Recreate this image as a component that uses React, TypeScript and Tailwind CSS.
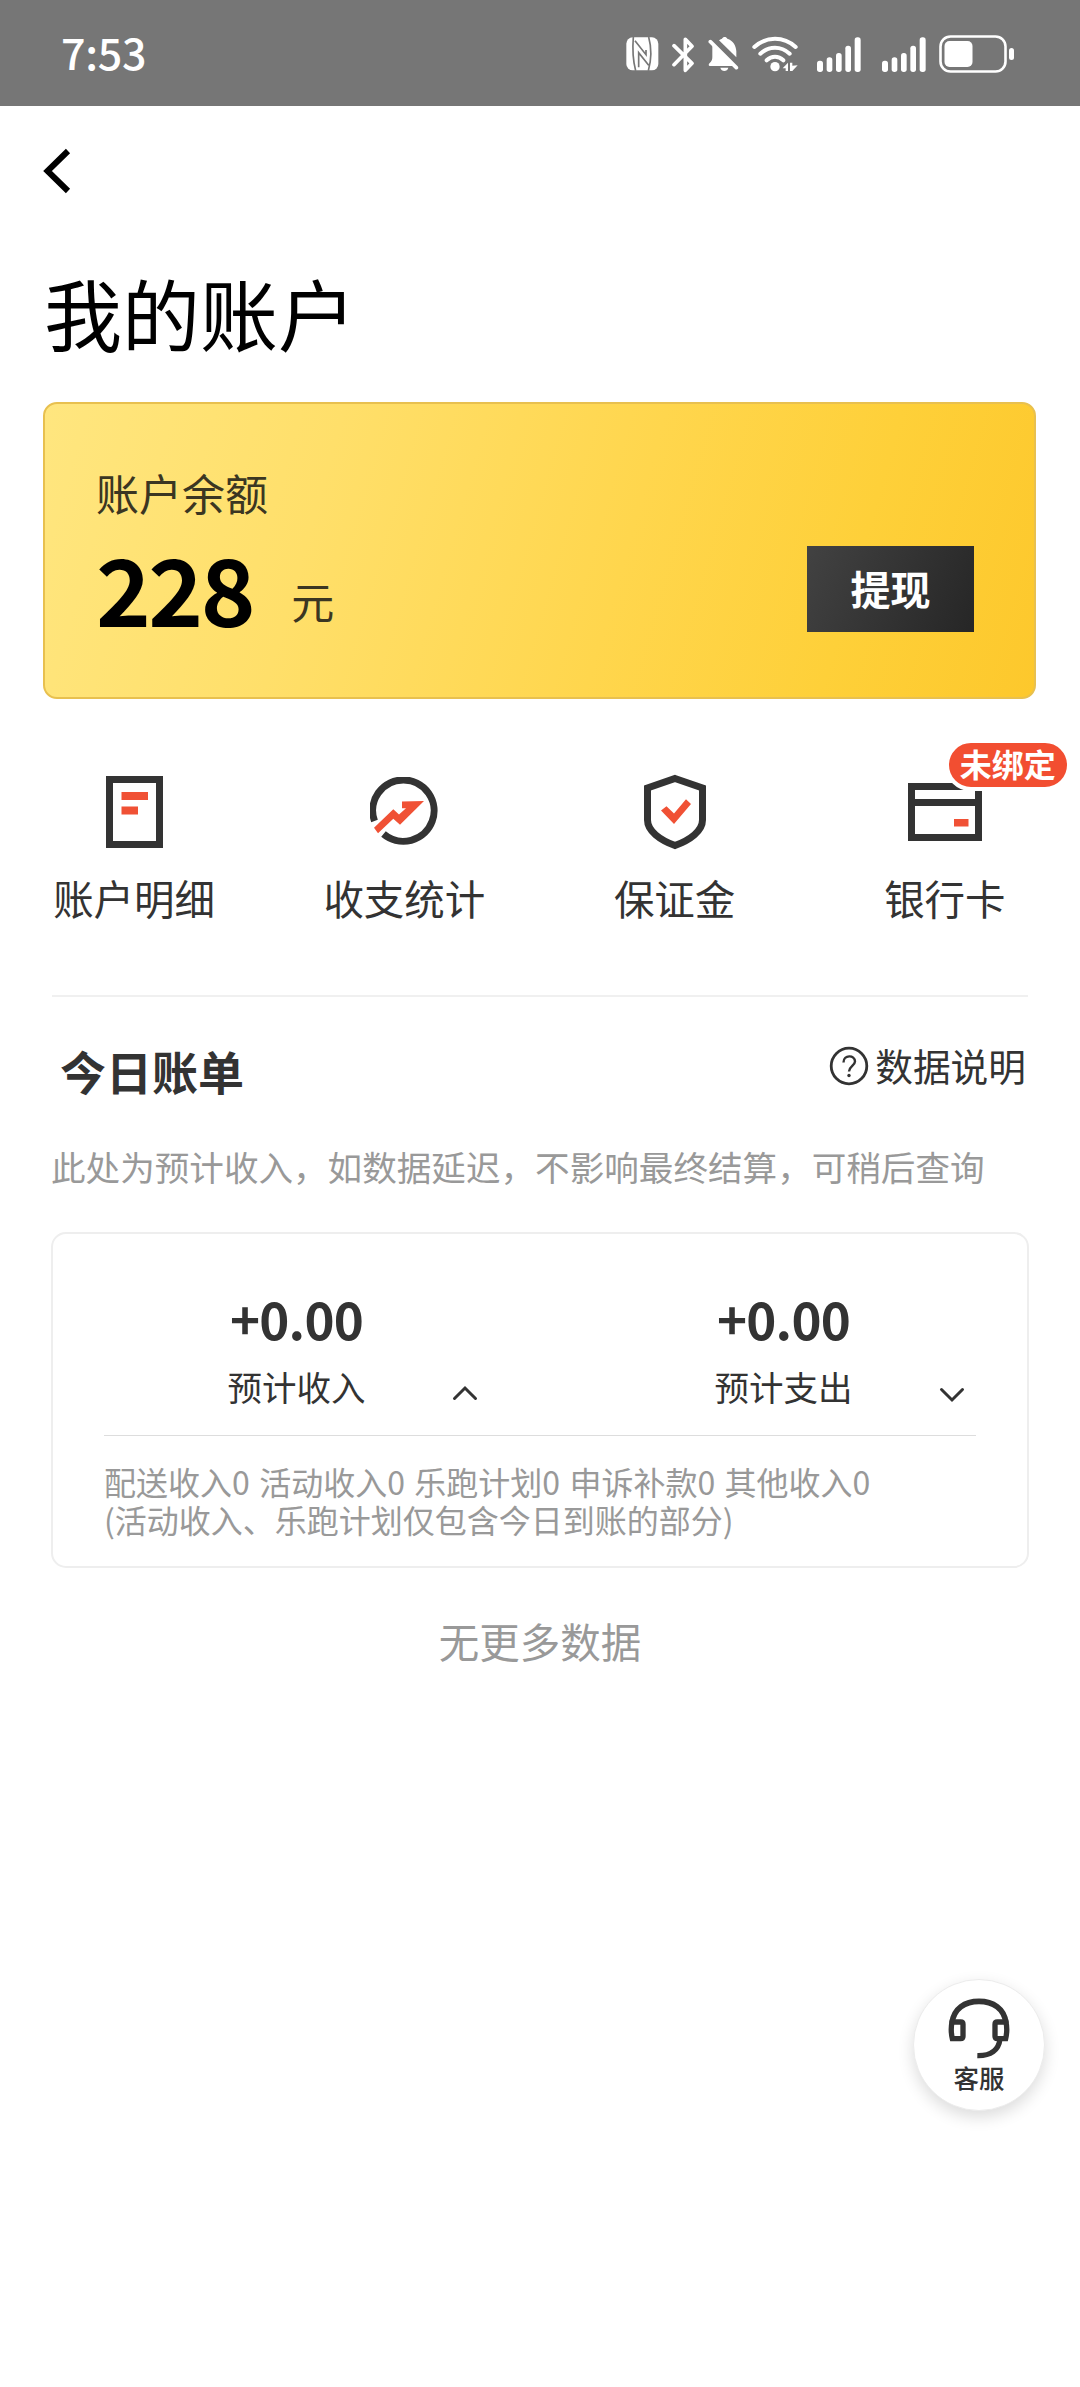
import React from 'react';

interface ShortcutProps {
  label: string;
  badge?: string;
  children: React.ReactNode;
}

interface AmountColumnProps {
  amount: string;
  label: string;
  expanded?: boolean;
}

const SignalIcon: React.FC = () => (
  <svg width="44" height="36" viewBox="0 0 132 108" fill="#fff">
    <rect x="0" y="71" width="18" height="34" rx="8" />
    <rect x="29" y="61" width="17" height="44" rx="8" />
    <rect x="57" y="48" width="17" height="57" rx="8" />
    <rect x="85" y="26" width="17" height="79" rx="8" />
    <rect x="113" y="1" width="18" height="104" rx="8" />
  </svg>
);

const StatusBar: React.FC = () => (
  <div className="flex h-[106px] items-center bg-[#767676] text-white">
    <span className="mt-[-4px] ml-[61px] w-[565px] text-[43px] leading-none font-medium tracking-[-0.3px]">7:53</span>
    {/* NFC */}
    <svg className="mt-[2px]" width="33" height="36" viewBox="0 0 99 108">
      <rect x="1" y="4" width="96" height="99" rx="19" fill="#fff" />
      <path
        d="M22 3C19 40 21 74 29 104M27 14L60 56V42M38 94V50L68 88M68 3C76 32 76 72 67 104"
        fill="none"
        stroke="#767676"
        strokeWidth="5"
      />
    </svg>
    {/* Bluetooth */}
    <svg className="mt-[3px] ml-[13px]" width="23" height="36" viewBox="0 0 69 108" fill="none" stroke="#fff" strokeWidth="11" strokeLinecap="round" strokeLinejoin="round">
      <path d="M6 26l54 53-20 21V7l20 21L6 83" />
    </svg>
    {/* Muted bell */}
    <svg className="mt-[2px] ml-[13px]" width="31" height="36" viewBox="0 0 93 108" fill="#fff">
      <path d="M33 13c4-3 7-4 9-5 3-7 13-7 16 0 17 6 26 20 27 38v18z" />
      <path d="M13 24l66 66H6c-5 0-5-6-1-9 6-5 8-10 8-18zM37 95h24c-3 13-21 13-24 0z" />
      <path d="M7 17l78 78" stroke="#fff" strokeWidth="11" strokeLinecap="round" />
    </svg>
    {/* Wi-Fi */}
    <svg className="mt-[2px] ml-[13px]" width="46" height="36" viewBox="0 0 138 108" fill="none" stroke="#fff" strokeWidth="12" strokeLinecap="round">
      <path d="M7 33c36-33 88-33 124 0M25 53c26-24 62-24 88 0M44 73c15-14 35-14 50 0" />
      <circle cx="69" cy="92" r="14" fill="#fff" stroke="none" />
      <path d="M108 80v25h-7v-8H92zM114 80h7v9l16-1-16 17h-7z" fill="#fff" stroke="none" />
    </svg>
    <div className="mt-[3px] ml-[19px] flex gap-[21px]">
      <SignalIcon />
      <SignalIcon />
    </div>
    {/* Battery */}
    <svg className="mt-[2px] ml-[13px]" width="77" height="38" viewBox="0 0 77 38" fill="none">
      <rect x="1.5" y="1.5" width="65" height="35" rx="10" stroke="#fff" strokeWidth="2.6" />
      <rect x="5.5" y="6" width="28" height="26" rx="5" fill="#fff" />
      <rect x="70" y="13" width="5" height="12" rx="2.5" fill="#fff" />
    </svg>
  </div>
);

const Shortcut: React.FC<ShortcutProps> = ({ label, badge, children }) => (
  <div className="relative flex flex-col items-center">
    <div className="flex h-[76px] items-center">{children}</div>
    {badge && (
      <span className="absolute top-[-35px] left-[135px] flex h-[52px] items-center rounded-full border-4 border-white bg-[#f24e31] px-[11px] text-[32px] leading-none font-bold whitespace-nowrap text-white">
        <span className="-mt-1">{badge}</span>
      </span>
    )}
    <span className="mt-[28px] text-[40.5px] leading-none text-[#333]">{label}</span>
  </div>
);

const AmountColumn: React.FC<AmountColumnProps> = ({ amount, label, expanded }) => (
  <div className="relative flex flex-1 flex-col items-center">
    <span className="text-[51px] leading-none font-bold tracking-[-0.8px] text-[#333]">{amount}</span>
    <span className="mt-[25px] text-[34.5px] leading-none text-[#333]">{label}</span>
    <svg
      className={`absolute right-[62px] ${expanded ? 'top-[92px]' : 'top-[94px]'}`}
      width="26"
      height="16"
      viewBox="0 0 26 16"
      fill="none"
      stroke="#333"
      strokeWidth="3"
      strokeLinecap="round"
    >
      <path d={expanded ? 'M2.5 13.5L13 3l10.5 10.5' : 'M2.5 2.5L13 13 23.5 2.5'} />
    </svg>
  </div>
);

const App: React.FC = () => {
  return (
    <div className="relative h-[2387px] w-[1080px] overflow-hidden bg-white font-['Noto_Sans_CJK_SC',sans-serif]">
      <StatusBar />

      <div className="flex h-[130px] items-center pl-[42px]">
        <svg width="30" height="46" viewBox="0 0 30 46" fill="none" stroke="#000" strokeWidth="6">
          <path d="M26 3L5.500 23 26 43" />
        </svg>
      </div>

      <h1 className="h-[166px] pt-[37px] pl-[44px] text-[78px] leading-none text-black">我的账户</h1>

      {/* Balance card */}
      <div className="ml-[43px] flex h-[297px] w-[993px] items-start justify-between rounded-[14px] border-2 border-[#e8c04f] bg-[linear-gradient(106deg,#ffe67f_0%,#ffdf6a_28%,#ffd64d_58%,#fed039_80%,#fdc82c_100%)] pr-[60px] pl-[51px]">
        <div className="pt-[67px]">
          <div className="text-[43px] leading-none text-[#3b3622]">账户余额</div>
          <div className="mt-[26px] flex items-start">
            <span className="text-[93px] leading-none font-bold tracking-[-2.5px] text-black">228</span>
            <span className="mt-[39px] ml-[38px] text-[43px] leading-none text-[#3b3622]">元</span>
          </div>
        </div>
        <button className="mt-[142px] flex h-[86px] w-[167px] items-center justify-center bg-[linear-gradient(115deg,#424242,#262626)] text-[40px] leading-none font-bold text-white">
          <span className="-mt-0.5">提现</span>
        </button>
      </div>

      <div className="mt-[75px] -ml-px grid grid-cols-4">
        <Shortcut label="账户明细">
          <svg width="57" height="72" viewBox="0 0 57 72">
            <rect x="3.5" y="3.5" width="50" height="65" fill="none" stroke="#333" strokeWidth="7" />
            <path d="M15.500 16h26.500v8H15.500zM15.500 30.500h16.500v8H15.500z" fill="#f05135" />
          </svg>
        </Shortcut>
        <Shortcut label="收支统计">
          <svg width="68" height="70" viewBox="370 776 68 70">
            <path d="M374.500 820A30.700 30.700 0 1 1 383.500 833" fill="none" stroke="#333" strokeWidth="7" />
            <path d="M374 826.700L393.300 808.300 399 813.500 406 807.300H402V800.500L424 800 400 823.700 393.300 817.700 378 832.300z" fill="#f05135" />
          </svg>
        </Shortcut>
        <Shortcut label="保证金">
          <svg width="64" height="76" viewBox="0 0 64 76">
            <path d="M32 4.500L59.500 14V46C59.500 57 47 66 32 71.500 17 66 4.500 57 4.500 46V14z" fill="none" stroke="#333" strokeWidth="7" />
            <path d="M18 36.500L23.500 32.300 31 39.500 43 25.300 48 30 31 50z" fill="#f05135" />
          </svg>
        </Shortcut>
        <Shortcut label="银行卡" badge="未绑定">
          <svg width="74" height="58" viewBox="0 0 74 58">
            <path d="M3.500 3.500h67v51h-67zM3.500 19.500h67" fill="none" stroke="#333" strokeWidth="7" />
            <path d="M46 36h14.500v7.500H46z" fill="#f05135" />
          </svg>
        </Shortcut>
      </div>

      <div className="mx-[52px] mt-[76px] h-[2px] bg-[#f0f0f0]" />

      <div className="flex h-[115px] justify-between pr-[54px] pl-[60px]">
        <h2 className="pt-[50px] text-[46px] leading-none font-bold text-[#333]">今日账单</h2>
        <div className="flex items-start">
          <svg className="mt-[49px] mr-[6px]" width="40" height="40" viewBox="0 0 40 40" fill="none" stroke="#333">
            <circle cx="20" cy="20" r="17.800" strokeWidth="2.800" />
            <path d="M14.500 16.500c0-8 11.500-8 11.500-1 0 4-6 5-6 10" strokeWidth="2.400" />
            <circle cx="20" cy="29.500" r="1.700" fill="#333" stroke="none" />
          </svg>
          <span className="pt-[49px] text-[37.700px] leading-none text-[#333]">数据说明</span>
        </div>
      </div>

      <p className="mt-[37px] pl-[51px] text-[34.600px] leading-none whitespace-nowrap text-[#999]">
        此处为预计收入，如数据延迟，不影响最终结算，可稍后查询
      </p>

      <div className="mx-[51px] mt-[49px] h-[336px] rounded-[15px] border-2 border-[#eee]">
        <div className="flex h-[201px] pt-[59px]">
          <AmountColumn amount="+0.00" label="预计收入" expanded />
          <AmountColumn amount="+0.00" label="预计支出" />
        </div>
        <div className="mx-[51px] border-t border-[#ddd] pt-[27px] text-[32px] leading-[37.500px] whitespace-nowrap text-[#999]">
          <div className="[word-spacing:2.2px]">配送收入0 活动收入0 乐跑计划0 申诉补款0 其他收入0</div>
          <div>(活动收入、乐跑计划仅包含今日到账的部分)</div>
        </div>
      </div>

      <div className="mt-[53px] text-center text-[40.500px] leading-none text-[#999]">无更多数据</div>

      {/* Floating customer service button */}
      <button className="absolute top-[1979px] left-[913px] flex h-[132px] w-[132px] flex-col items-center rounded-full border border-[#ececec] bg-white pt-[18px] shadow-[0_6px_16px_rgba(0,0,0,0.14)]">
        <svg width="62" height="62" viewBox="205 143 186 186" fill="none" stroke="#333">
          <path d="M217 218C222 174 256 153 298 153s76 21 81 65" strokeWidth="17" />
          <path d="M217 215h26q7 0 7 7v36q0 7-7 7h-25q-6-26-1-50zM379 215h-26q-7 0-7 7v36q0 7 7 7h25q6-26 1-50z" strokeWidth="16" />
          <path d="M361 266c-4 34-28 51-68 50" strokeWidth="16" />
        </svg>
        <span className="mt-[4px] text-[25.500px] leading-none font-medium text-[#333]">客服</span>
      </button>
    </div>
  );
};

export default App;
